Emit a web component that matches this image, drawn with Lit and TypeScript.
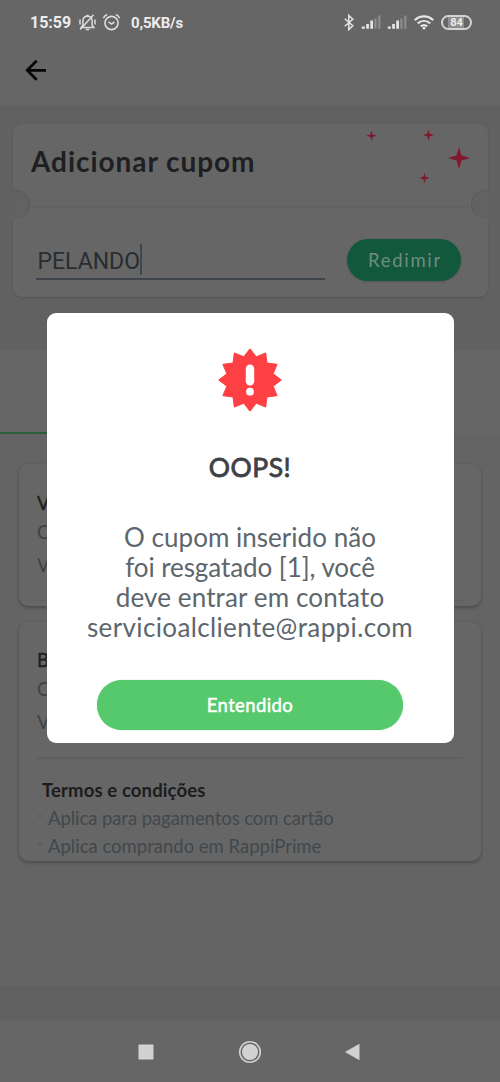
import { LitElement, html, css, svg } from "lit";
import { customElement } from "lit/decorators.js";

const signal = html`<svg width="20" height="15" viewBox="0 0 20 15">
  <path d="M.8 13.7v-2.2h3v2.2zM5.2 13.7V9h2.7v4.7zM9.3 13.7V5.5H12v8.2z" fill="#e6e6e6"/>
  <path d="M13.3 13.7V3.4h2.3v10.3zM17.2 13.7V.5h2.2v13.2z" fill="#8d8d8d"/>
</svg>`;

const star = (x: number, y: number, r: number) => {
  const k = r * 0.23;
  return svg`<path fill="#80182e" d=${`M${x} ${y - r}L${x + k} ${y - k}L${x + r} ${y}L${x + k} ${y + k}L${x} ${y + r}L${x - k} ${y + k}L${x - r} ${y}L${x - k} ${y - k}Z`}/>`;
};

const burst = Array.from({ length: 24 }, (_, i) => {
  const r = i % 2 ? 24 : 31.3;
  const a = (i * Math.PI) / 12;
  return `${(34 + r * Math.sin(a)).toFixed(2)},${(34 - r * Math.cos(a)).toFixed(2)}`;
}).join(" ");

@customElement("app-root")
export class AppRoot extends LitElement {
  static styles = css`
    :host {
      display: flex;
      flex-direction: column;
      position: relative;
      width: 500px;
      height: 1082px;
      overflow: hidden;
      background: #656565;
      font-family: Lato, "Open Sans", sans-serif;
      white-space: nowrap;
    }
    * { box-sizing: border-box; }
    svg { display: block; flex: none; }
    .status {
      height: 44px;
      display: flex;
      align-items: center;
      padding: 0 28px 0 30px;
      background: #666;
      color: #ececec;
      font: 700 15px/20px Roboto, sans-serif;
    }
    .clock { width: 48px; font-size: 16px; padding-top: 1px; }
    .alarm { margin-left: 5px; }
    .speed { margin-left: 10px; padding-top: 1px; font-size: 15px; letter-spacing: -0.2px; }
    .right { margin-left: auto; display: flex; align-items: center; }
    .sig { margin-left: 6px; }
    .wifi { margin-left: 7px; }
    .battery {
      width: 31px; height: 15px; margin-left: 7px;
      border: 2px solid #d4d4d4; border-radius: 8px;
      display: flex; justify-content: center; align-items: center;
      font-size: 11px; line-height: 11px;
      background: linear-gradient(90deg, #666 5px, #8e8e8e 5px, #8e8e8e 21px, #666 21px);
    }
    .bar { height: 62px; padding: 14px 0 0 24px; background: #666; border-bottom: 1px solid #646262; }
    .band { height: 244px; padding: 18px 12.5px 0; background: #616161; }
    .ticket {
      position: relative; height: 173px; border-radius: 9px; background: #666;
      box-shadow: 0 1px 2px #555;
    }
    .top { height: 84px; padding: 19.5px 0 0 18.5px; border-bottom: 2px solid #626262; margin: 0 18px 0 0; }
    h1 { margin: 0; font-size: 28px; line-height: 34px; font-weight: 700; letter-spacing: 0.95px; color: #1d1f22; }
    .notch {
      position: absolute; top: 66px; width: 19px; height: 29px;
      background: #626262; border: 1px solid #5a5a5a;
    }
    .l { left: -2px; border-left: 0; border-radius: 0 15px 15px 0; border-bottom-color: #626262; }
    .r { right: -2px; border-right: 0; border-radius: 15px 0 0 15px; border-bottom-color: #626262; }
    .stars { position: absolute; left: 343px; top: 0; }
    .form { display: flex; padding: 31px 26.5px 0 23px; justify-content: space-between; }
    .field {
      width: 289px; height: 41px; border-bottom: 2px solid #3e4449; padding-left: 2px;
      display: flex; align-items: flex-start;
      font: 400 23px/45px Roboto, sans-serif; color: #272d30; letter-spacing: 0;
    }
    .caret { width: 2px; height: 31px; margin: 5px 0 0 0; background: #3f474c; }
    .redeem {
      width: 114px; height: 42px; border-radius: 21px; background: #12583d; color: #6f8c80;
      font-size: 18.5px; line-height: 43px; text-align: center; letter-spacing: 1.7px; padding-left: 2px;
      box-shadow: 0 1px 2px #555;
    }
    .tabs { height: 84px; background: #666; }
    .tab { width: 250px; height: 84px; border-bottom: 2px solid #2b5f3c; }
    .list { height: 552px; padding: 30px 19px 0; display: flex; flex-direction: column; gap: 16px; background: #646464; }
    .coupon {
      border-radius: 9px; background: #666; padding: 25px 18px 0; height: 142px;
      box-shadow: 0 2px 3px #4d4d4d, 0 0 2px #5c5c5c; font-size: 18.5px;
    }
    .coupon.big { height: 239px; padding-top: 24px; }
    .name { height: 27px; line-height: 28px; -webkit-text-stroke: 0.4px #1e1f20; color: #1e1f20; }
    .meta { height: 34px; line-height: 34px; color: #3d4347; }
    .first { height: 32px; line-height: 32px; }
    .rule { height: 1px; background: #5f5f5f; }
    .last { margin-top: 18px; }
    .big .rule { margin-top: 18px; height: 2px; background: #5e5e5e; }
    h3 { margin: 18px 0 0 5px; font-size: 18.5px; line-height: 26px; font-weight: 700; letter-spacing: 0.13px; color: #1b1c1e; }
    .item { display: flex; align-items: center; height: 28px; color: #41484d; letter-spacing: -0.07px; line-height: 28px; padding-top: 1px; }
    .item::before { content: ""; width: 4px; height: 4px; border-radius: 50%; background: #596164; margin: -4px 6px 0 1px; }
    .item2 { letter-spacing: 0; }
    .foot { height: 35px; background: #616161; border-bottom: 1px solid #646464; }
    .nav { height: 61px; background: #666; display: flex; justify-content: center; padding-top: 18px; gap: 78px; }
    .dialog {
      position: absolute; left: 46.5px; top: 313px; width: 407px; height: 430px;
      border-radius: 9px; background: #fff; display: flex; flex-direction: column; align-items: center;
      padding-top: 33px;
    }
    h2 { margin: 37px 0 0; height: 32px; font-size: 26.5px; line-height: 32px; font-weight: 400; -webkit-text-stroke: 0.8px #3e4045; color: #3e4045; letter-spacing: 0.5px; }
    .msg { margin-top: 39px; display: flex; flex-direction: column; align-items: center; font-size: 26px; line-height: 30px; color: #5d666d; }
    .m1 { letter-spacing: 0.03px; }
    .m2 { letter-spacing: -0.07px; }
    .m3 { letter-spacing: 0.13px; }
    .m4 { letter-spacing: 0.37px; }
    .ok {
      margin-top: 38px; width: 306px; height: 50px; border-radius: 25px; background: #55c96c; color: #fff;
      text-align: center; font-size: 18.5px; line-height: 51px; font-weight: 400; -webkit-text-stroke: 0.5px #fff; letter-spacing: 0.4px;
      box-shadow: 0 0 1px #55c96c;
    }
  `;

  render() {
    return html`
      <div class="status">
        <span class="clock">15:59</span>
        <svg width="19" height="19" viewBox="0 0 19 19" fill="none" stroke="#dcdcdc" stroke-width="1.5">
          <path d="M3.2 14.6h12.6l-1.7-2.3V8c0-3-1.8-4.8-4.6-4.8S4.9 5 4.9 8v4.3zM7.8 16.4h3.6M8.4 2.4h2.2M2 6.5v5M17 6.5v5M2.2 16.5 15.6 1.8"/>
        </svg>
        <svg class="alarm" width="19" height="19" viewBox="0 0 19 19" fill="none" stroke="#dcdcdc" stroke-width="1.6">
          <circle cx="9.5" cy="10" r="6.6"/><path d="M6.6 8.8l2.9 2.3 3-2.1M1.3 5.2C2 3.5 3.4 2.2 5.2 1.5M17.7 5.2c-.7-1.7-2.1-3-3.9-3.7"/>
        </svg>
        <span class="speed">0,5KB/s</span>
        <span class="right">
          <svg width="12" height="17" viewBox="0 0 12 17" fill="none" stroke="#e6e6e6" stroke-width="1.5"><path d="M1.8 4.8l8 7-4 3.8V1.4l4 3.8-8 7"/></svg>
          <span class="sig">${signal}</span><span class="sig">${signal}</span>
          <svg class="wifi" width="20" height="15" viewBox="0 0 20 15" fill="none" stroke="#e6e6e6" stroke-width="2.2"><path d="M.8 5.2c5.3-5 13.1-5 18.4 0M3.8 8.4c3.7-3.2 8.7-3.2 12.4 0M6.8 11.4c2-1.6 4.4-1.6 6.4 0"/><circle cx="10" cy="13.2" r="1.4" fill="#e6e6e6" stroke="none"/></svg>
          <span class="battery">84</span>
        </span>
      </div>
      <div class="bar">
        <svg width="24" height="24" viewBox="0 0 24 24" fill="none" stroke="#050505" stroke-width="2.7"><path d="M22 12.3H4M12.7 2.8 3.2 12.3l9.5 9.5"/></svg>
      </div>
      <div class="band">
        <div class="ticket">
          <div class="top"><h1>Adicionar cupom</h1></div>
          <div class="form">
            <div class="field"><span>PELANDO</span><i class="caret"></i></div>
            <div class="redeem">Redimir</div>
          </div>
          <svg class="stars" width="120" height="66" viewBox="0 0 120 66">
            ${star(15.5, 11.7, 5.2)}${star(72.5, 11, 5.5)}${star(68.5, 54, 5.2)}${star(103, 34, 11)}
          </svg>
          <div class="notch l"></div><div class="notch r"></div>
        </div>
      </div>
      <div class="tabs"><div class="tab"></div></div>
      <div class="list">
        <div class="coupon">
          <div class="name">V</div><div class="meta first">C</div><div class="meta">V</div>
          <div class="rule last"></div>
        </div>
        <div class="coupon big">
          <div class="name">B</div><div class="meta first">C</div><div class="meta">V</div>
          <div class="rule"></div>
          <h3>Termos e condições</h3>
          <div class="item">Aplica para pagamentos com cartão</div>
          <div class="item item2">Aplica comprando em RappiPrime</div>
        </div>
      </div>
      <div class="foot"></div>
      <div class="nav">
        <svg width="26" height="26" viewBox="0 0 26 26"><rect x="5.5" y="5.5" width="15" height="15" rx=".5" fill="#d2d2d2"/></svg>
        <svg width="26" height="26" viewBox="0 0 26 26"><circle cx="13" cy="13" r="10.3" fill="none" stroke="#d2d2d2" stroke-width="1.6"/><circle cx="13" cy="13" r="8" fill="#d2d2d2"/></svg>
        <svg width="26" height="26" viewBox="0 0 26 26"><path d="M4 13 18.5 4.7v16.6z" fill="#d2d2d2"/></svg>
      </div>
      <div class="dialog">
        <svg width="68" height="68" viewBox="0 0 68 68">
          <polygon points=${burst} fill="#fe4044" stroke="#fe4044" stroke-linejoin="round"/>
          <rect x="29.8" y="18.5" width="8.4" height="21" rx="4.2" fill="#fff"/><circle cx="34" cy="45.7" r="3.9" fill="#fff"/>
        </svg>
        <h2>OOPS!</h2>
        <div class="msg">
          <span class="m1">O cupom inserido não</span><span class="m2">foi resgatado [1], você</span><span class="m3">deve entrar em contato</span><span class="m4">servicioalcliente@rappi.com</span>
        </div>
        <div class="ok">Entendido</div>
      </div>
    `;
  }
}
